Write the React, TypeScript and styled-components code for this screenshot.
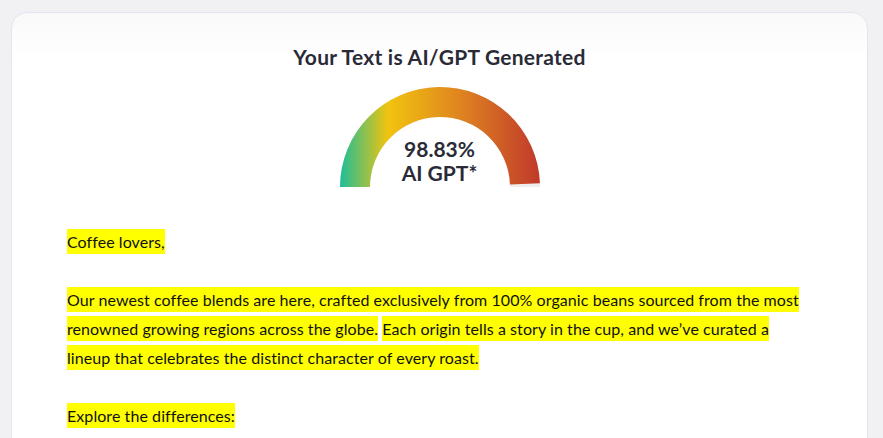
import React from "react";
import styled, { createGlobalStyle } from "styled-components";

const Global = createGlobalStyle`
  html, body { margin: 0; padding: 0; background: #f1f1f4; }
  body { font-family: "Lato", "Liberation Sans", sans-serif; overflow: hidden; }
  * { box-sizing: border-box; }
`;

const Page = styled.div`
  padding: 12px 15px 0 11px;
  height: 438px;
  overflow: hidden;
`;

const Card = styled.div`
  background: linear-gradient(#f9f9fa 0px, #ffffff 45px);
  border: 1px solid #e3e3f6;
  border-radius: 16px;
  padding: 30px 55px 40px 55px;
  min-height: 500px;
`;

const Title = styled.h1`
  margin: 0;
  text-align: center;
  font-size: 21px;
  line-height: 28px;
  font-weight: 700;
  letter-spacing: 0.25px;
  color: #2b2b38;
`;

const GaugeWrap = styled.div`
  position: relative;
  width: 200px;
  height: 100px;
  margin: 16px auto 0;
`;

const GaugeLabel = styled.div`
  position: absolute;
  left: 0;
  right: 0;
  bottom: 0;
  text-align: center;
  font-size: 21px;
  line-height: 24px;
  font-weight: 700;
  color: #2b2b38;
  padding-bottom: 2px;
`;

const Body = styled.div`
  margin-top: 40px;
  font-size: 16px;
  line-height: 29px;
  letter-spacing: 0.07px;
  color: #111;
`;

const Mark = styled.span`
  background: #ffff00;
  padding: 3px 0;
`;

function arcPath(cx: number, cy: number, r1: number, r2: number, a0: number, a1: number) {
  const p = (r: number, a: number) => [cx - r * Math.cos(a), cy - r * Math.sin(a)];
  const [x0, y0] = p(r2, a0);
  const [x1, y1] = p(r2, a1);
  const [x2, y2] = p(r1, a1);
  const [x3, y3] = p(r1, a0);
  const large = a1 - a0 > Math.PI ? 1 : 0;
  return `M${x0} ${y0} A${r2} ${r2} 0 ${large} 1 ${x1} ${y1} L${x2} ${y2} A${r1} ${r1} 0 ${large} 0 ${x3} ${y3} Z`;
}

function Gauge({ value }: { value: number }) {
  const end = (Math.PI * value) / 100;
  return (
    <GaugeWrap>
      <svg width="200" height="100" viewBox="0 0 200 100">
        <defs>
          <linearGradient id="g" x1="0" y1="0" x2="1" y2="0">
            <stop offset="0" stopColor="#1dbd98" />
            <stop offset="0.24" stopColor="#f1c40f" />
            <stop offset="0.6" stopColor="#df8420" />
            <stop offset="1" stopColor="#c0392b" />
          </linearGradient>
        </defs>
        <path d={arcPath(100, 100, 70, 100, 0, Math.PI)} fill="#eeeeee" />
        <path d={arcPath(100, 100, 70, 100, 0, end)} fill="url(#g)" />
      </svg>
      <GaugeLabel>
        98.83%
        <br />
        AI GPT*
      </GaugeLabel>
    </GaugeWrap>
  );
}

export default function App() {
  return (
    <Page>
      <Global />
      <Card>
        <Title>Your Text is AI/GPT Generated</Title>
        <Gauge value={98.83} />
        <Body>
          <Mark>Coffee lovers,</Mark>
          <br />
          <br />
          <Mark>
            Our newest coffee blends are here, crafted exclusively from 100% organic beans sourced from the most
            renowned growing regions across the globe.
          </Mark>{" "}
          <Mark>
            Each origin tells a story in the cup, and we’ve curated a lineup that celebrates the distinct character of
            every roast.
          </Mark>
          <br />
          <br />
          <Mark>Explore the differences:</Mark>
        </Body>
      </Card>
    </Page>
  );
}
